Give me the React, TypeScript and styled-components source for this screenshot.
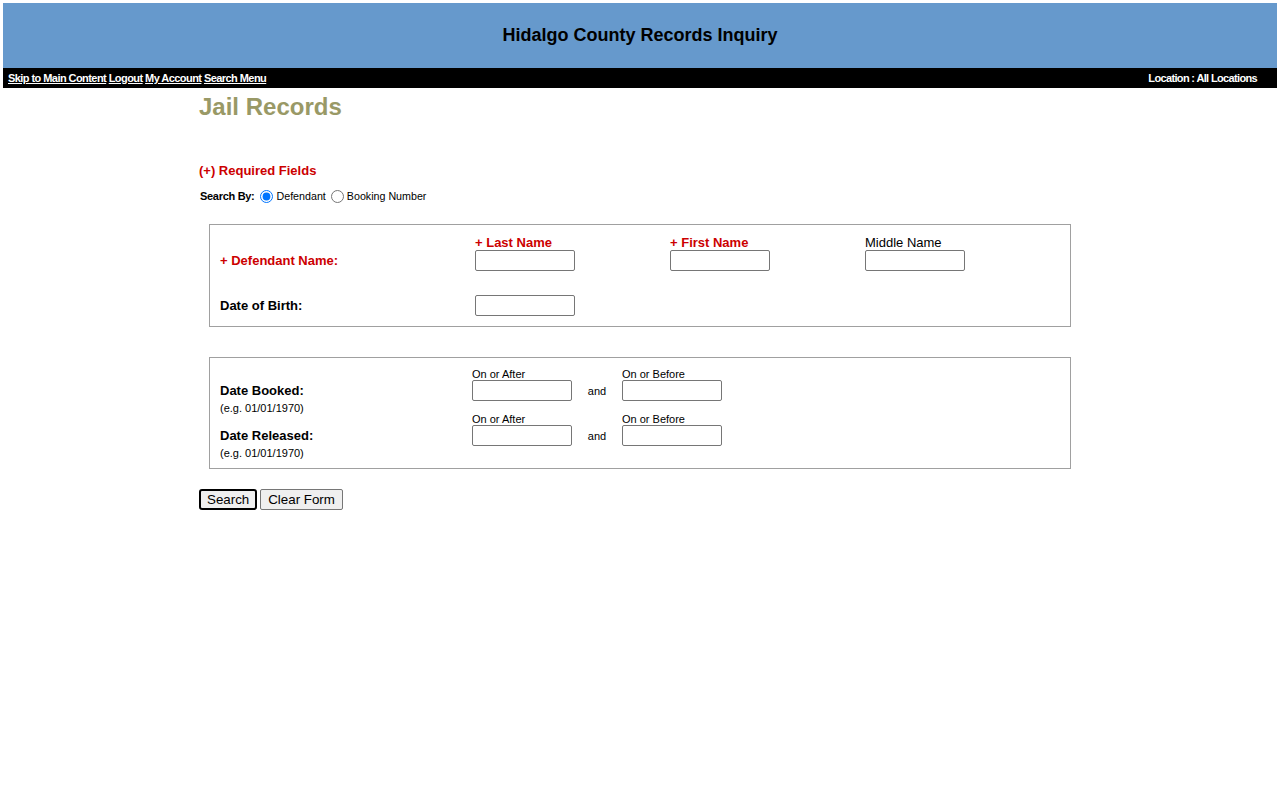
import styled, { createGlobalStyle } from "styled-components";

const GlobalStyle = createGlobalStyle`
  body {
    margin: 3px;
    background: #fff;
    font-family: "Liberation Sans", Arial, sans-serif;
    color: #000;
  }
`;

function NameSection() {
  return (
    <FieldBox>
      <NameGrid>
        <span />
        <ColumnCaption $required>+ Last Name</ColumnCaption>
        <ColumnCaption $required>+ First Name</ColumnCaption>
        <ColumnCaption>Middle Name</ColumnCaption>

        <FieldLabel $required>+ Defendant Name:</FieldLabel>
        <TextInput type="text" aria-label="Last Name" />
        <TextInput type="text" aria-label="First Name" />
        <TextInput type="text" aria-label="Middle Name" />
      </NameGrid>
      <DobRow>
        <FieldLabel>Date of Birth:</FieldLabel>
        <TextInput type="text" aria-label="Date of Birth" />
      </DobRow>
    </FieldBox>
  );
}

function DateRange({ label }: { label: string }) {
  return (
    <DateGrid>
      <span />
      <SmallCaption>On or After</SmallCaption>
      <span />
      <SmallCaption>On or Before</SmallCaption>

      <FieldLabel>{label}</FieldLabel>
      <TextInput type="text" aria-label={label + " on or after"} />
      <AndText>and</AndText>
      <TextInput type="text" aria-label={label + " on or before"} />

      <Hint>(e.g. 01/01/1970)</Hint>
    </DateGrid>
  );
}

function App() {
  return (
    <>
      <GlobalStyle />
      <Banner>
        <BannerTitle>Hidalgo County Records Inquiry</BannerTitle>
      </Banner>
      <NavBar>
        <NavLinks>
          <NavLink href="#main">Skip to Main Content</NavLink>{" "}
          <NavLink href="#">Logout</NavLink>{" "}
          <NavLink href="#">My Account</NavLink>{" "}
          <NavLink href="#">Search Menu</NavLink>
        </NavLinks>
        <LocationText>Location : All Locations</LocationText>
      </NavBar>

      <Main id="main">
        <PageTitle>Jail Records</PageTitle>
        <RequiredNote>(+) Required Fields</RequiredNote>

        <SearchByRow>
          <SearchByLabel>Search By:</SearchByLabel>
          <RadioLabel>
            <input type="radio" name="searchBy" defaultChecked />
            Defendant
          </RadioLabel>
          <RadioLabel>
            <input type="radio" name="searchBy" />
            Booking Number
          </RadioLabel>
        </SearchByRow>

        <NameSection />

        <DateBox>
          <DateRange label="Date Booked:" />
          <DateRange label="Date Released:" />
        </DateBox>

        <ButtonRow>
          <FormButton $primary type="submit">Search</FormButton>
          <FormButton type="reset">Clear Form</FormButton>
        </ButtonRow>
      </Main>
    </>
  );
}

export default App;

const Banner = styled.header`
  display: flex;
  justify-content: center;
  align-items: center;
  height: 65px;
  background: #6699cc;
`;

const BannerTitle = styled.h1`
  margin: 0;
  font-size: 18px;
  font-weight: bold;
  color: #000;
`;

const NavBar = styled.nav`
  display: flex;
  justify-content: space-between;
  align-items: center;
  height: 20px;
  padding: 0 20px 0 5px;
  background: #000;
  color: #fff;
`;

const NavLinks = styled.div`
  font-size: 11px;
  font-weight: bold;
  letter-spacing: -0.56px;
  white-space: nowrap;
`;

const NavLink = styled.a`
  color: #fff;
  text-decoration: underline;
`;

const LocationText = styled.span`
  font-size: 11px;
  font-weight: bold;
  letter-spacing: -0.65px;
`;

const Main = styled.main`
  width: 882px;
  margin: 0 auto;
`;

const PageTitle = styled.h2`
  margin: 5px 0 0;
  font-size: 24px;
  line-height: 28px;
  font-weight: bold;
  color: #999966;
`;

const RequiredNote = styled.p`
  margin: 42px 0 0;
  font-size: 13px;
  line-height: 16px;
  font-weight: bold;
  color: #cc0000;
`;

const SearchByRow = styled.div`
  display: flex;
  align-items: center;
  height: 16px;
  margin-top: 9px;
  padding-left: 1px;
  font-size: 11px;

  input {
    margin: 1px 3px 0 5px;
  }
`;

const SearchByLabel = styled.span`
  margin-right: 1px;
  font-weight: bold;
  letter-spacing: -0.3px;
`;

const RadioLabel = styled.label`
  display: flex;
  align-items: center;
  font-size: 10.7px;
`;

const FieldBox = styled.section`
  margin: 20px 10px 0;
  padding: 10px;
  border: 1px solid #a0a0a0;
`;

const DateBox = styled(FieldBox)`
  margin-top: 30px;
  padding: 11px 10px 9px;
`;

const NameGrid = styled.div`
  display: grid;
  grid-template-columns: 255px 195px 195px 1fr;
  grid-template-rows: 15px 21px;
  align-items: center;
`;

const DobRow = styled.div`
  display: grid;
  grid-template-columns: 255px 1fr;
  align-items: center;
  margin-top: 24px;
`;

const FieldLabel = styled.span<{ $required?: boolean }>`
  font-size: 13px;
  line-height: 15px;
  font-weight: bold;
  color: ${(p) => (p.$required ? "#cc0000" : "#000")};
`;

const ColumnCaption = styled.span<{ $required?: boolean }>`
  align-self: end;
  font-size: 13px;
  line-height: 15px;
  font-weight: ${(p) => (p.$required ? "bold" : "normal")};
  color: ${(p) => (p.$required ? "#cc0000" : "#000")};
`;

const TextInput = styled.input`
  box-sizing: border-box;
  width: 100px;
  height: 21px;
  margin: 0;
  padding: 1px 2px;
  border: 1px solid #767676;
  border-radius: 2px;
  background: #fff;
  font-family: "Liberation Sans", Arial, sans-serif;
  font-size: 13px;
`;

const DateGrid = styled.div`
  display: grid;
  grid-template-columns: 252px 100px 50px 100px;
  grid-template-rows: 11px 21px 13px;
  align-items: center;
`;

const SmallCaption = styled.span`
  align-self: end;
  font-size: 11px;
  line-height: 12px;
`;

const AndText = styled.span`
  font-size: 11px;
  text-align: center;
  padding-top: 1px;
`;

const Hint = styled.span`
  grid-column: 1;
  align-self: start;
  margin-top: 1px;
  font-size: 11px;
  line-height: 12px;
  white-space: nowrap;
`;

const ButtonRow = styled.div`
  display: flex;
  gap: 3px;
  margin-top: 20px;
`;

const FormButton = styled.button<{ $primary?: boolean }>`
  box-sizing: border-box;
  height: 21px;
  margin: 0;
  padding: ${(p) => (p.$primary ? "0 6px" : "0 7px")};
  border: ${(p) => (p.$primary ? "2px solid #000" : "1px solid #767676")};
  border-radius: ${(p) => (p.$primary ? "3px" : "2px")};
  background: #efefef;
  font-family: "Liberation Sans", Arial, sans-serif;
  font-size: 13.333px;
  color: #000;
`;
